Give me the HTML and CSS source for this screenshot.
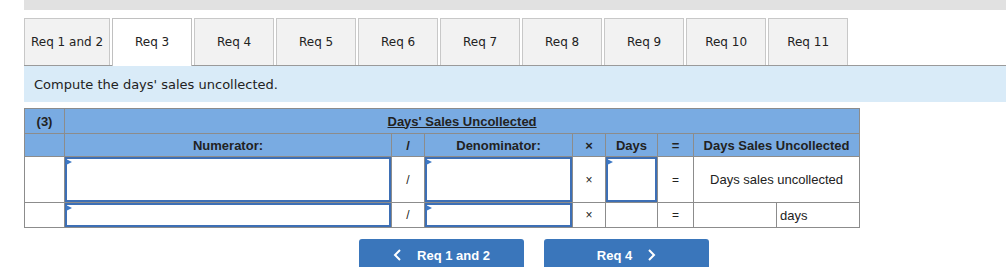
FILE: index.html
```html
<!DOCTYPE html>
<html lang="en">
<head>
  <meta charset="UTF-8" />
  <title>Days' Sales Uncollected</title>
  <link rel="stylesheet" href="styles.css">
</head>
<body>
  <div class="top-bar"></div>

  <div class="tabs">
    <div class="tab">Req 1 and 2</div>
    <div class="tab active">Req 3</div>
    <div class="tab">Req 4</div>
    <div class="tab">Req 5</div>
    <div class="tab">Req 6</div>
    <div class="tab">Req 7</div>
    <div class="tab">Req 8</div>
    <div class="tab">Req 9</div>
    <div class="tab">Req 10</div>
    <div class="tab">Req 11</div>
  </div>

  <div class="prompt">Compute the days' sales uncollected.</div>

  <table class="calc">
    <colgroup>
      <col class="c-label">
      <col class="c-num">
      <col class="c-op">
      <col class="c-den">
      <col class="c-op">
      <col class="c-days">
      <col class="c-eq">
      <col class="c-res">
      <col class="c-res">
    </colgroup>
    <tr class="row-title">
      <th>(3)</th>
      <th colspan="8"><u>Days' Sales Uncollected</u></th>
    </tr>
    <tr class="row-head">
      <th></th>
      <th>Numerator:</th>
      <th>/</th>
      <th>Denominator:</th>
      <th>&times;</th>
      <th>Days</th>
      <th>=</th>
      <th colspan="2">Days Sales Uncollected</th>
    </tr>
    <tr class="row-tall">
      <td></td>
      <td class="cell-input"><div class="field"></div></td>
      <td class="op">/</td>
      <td class="cell-input"><div class="field"></div></td>
      <td class="op">&times;</td>
      <td class="cell-input"><div class="field"></div></td>
      <td class="op">=</td>
      <td colspan="2" class="result">Days sales uncollected</td>
    </tr>
    <tr class="row-short">
      <td></td>
      <td class="cell-input"><div class="field"></div></td>
      <td class="op">/</td>
      <td class="cell-input"><div class="field"></div></td>
      <td class="op">&times;</td>
      <td></td>
      <td class="op">=</td>
      <td></td>
      <td class="unit">days</td>
    </tr>
  </table>

  <div class="nav">
    <button class="nav-btn" type="button">
      <svg width="10" height="14" viewBox="0 0 10 14"><polyline points="7,2 2,7 7,12" fill="none" stroke="#fff" stroke-width="2"/></svg>
      <span>Req 1 and 2</span>
    </button>
    <button class="nav-btn" type="button">
      <span>Req 4</span>
      <svg width="10" height="14" viewBox="0 0 10 14"><polyline points="3,2 8,7 3,12" fill="none" stroke="#fff" stroke-width="2"/></svg>
    </button>
  </div>
</body>
</html>
```

FILE: styles.css
```css
* {
  margin: 0;
  padding: 0;
  box-sizing: border-box;
}

body {
  font-family: 'Liberation Sans', Arial, sans-serif;
  color: #222;
  background: #fff;
  width: 1006px;
  overflow: hidden;
}

.top-bar {
  margin-left: 24px;
  height: 10px;
  background-color: #e1e1e1;
}

.tabs {
  display: flex;
  gap: 2px;
  margin-top: 8px;
  margin-left: 24px;
  border-bottom: 1px solid #9a9a9a;
}

.tab {
  font-family: 'DejaVu Sans', Verdana, sans-serif;
  font-size: 12px;
  color: #222;
  min-width: 80px;
  height: 47px;
  padding: 0 6px;
  display: flex;
  align-items: center;
  justify-content: center;
  background-color: #f2f2f2;
  border: 1px solid #c8c8c8;
  border-bottom: none;
}

.tab.active {
  background-color: #fff;
  height: 48px;
  margin-bottom: -1px;
  padding-bottom: 1px;
  border-color: #c0c0c0;
}

.prompt {
  font-family: 'DejaVu Sans', Verdana, sans-serif;
  font-size: 13px;
  color: #222;
  margin-left: 24px;
  height: 36px;
  padding-left: 10px;
  display: flex;
  align-items: center;
  background-color: #d9ebf8;
}

.calc {
  margin-top: 6px;
  margin-left: 24px;
  width: 836px;
  border-collapse: collapse;
  table-layout: fixed;
  font-size: 13px;
}

.c-label { width: 40px; }
.c-num { width: 327px; }
.c-op { width: 33px; }
.c-den { width: 148px; }
.c-days { width: 52px; }
.c-eq { width: 36px; }
.c-res { width: 83px; }

.calc th,
.calc td {
  border: 1px solid #8c8c8c;
  text-align: center;
  padding: 0;
}

.calc th {
  background-color: #79abe2;
  font-weight: bold;
}

.row-title th { height: 25px; }
.row-head th { height: 23px; }
.row-tall td { height: 46px; }
.row-short td { height: 25px; }

.op {
  font-size: 12px;
}

.cell-input {
  vertical-align: top;
}

.field {
  position: relative;
  height: 100%;
  border: 2px solid #3d6fb5;
  background: #fff;
}

.row-tall .field { height: 45px; }
.row-short .field { height: 24px; }

.field::before {
  content: '';
  position: absolute;
  left: -1px;
  top: 0;
  border-left: 6px solid #3d78c4;
  border-top: 3px solid transparent;
  border-bottom: 3px solid transparent;
}

.calc td.unit {
  text-align: left;
  padding-left: 3px;
}

.nav {
  display: flex;
  gap: 20px;
  margin-top: 11px;
  padding-left: 359px;
}

.nav-btn {
  width: 165px;
  height: 32px;
  display: flex;
  align-items: center;
  justify-content: center;
  gap: 14px;
  background-color: #3a76bb;
  color: #fff;
  border: none;
  border-radius: 3px;
  font-family: 'Liberation Sans', Arial, sans-serif;
  font-size: 13px;
  font-weight: bold;
}
```
